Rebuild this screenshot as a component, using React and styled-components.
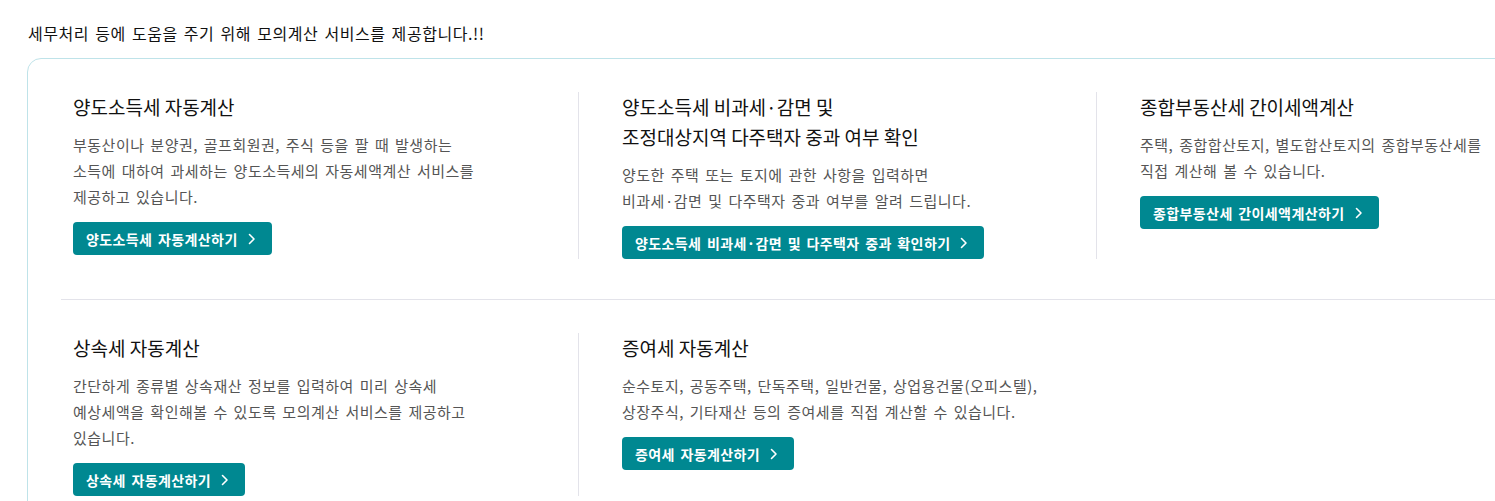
import React from 'react';
import styled, { createGlobalStyle } from 'styled-components';

const GlobalStyle = createGlobalStyle`
  html, body {
    margin: 0;
    padding: 0;
    background: #ffffff;
    overflow: hidden;
  }
  body {
    font-family: "Noto Sans CJK KR", "Noto Sans", sans-serif;
  }
`;

const rows = [
  [
    {
      title: ['양도소득세 자동계산'],
      desc: [
        '부동산이나 분양권, 골프회원권, 주식 등을 팔 때 발생하는',
        '소득에 대하여 과세하는 양도소득세의 자동세액계산 서비스를',
        '제공하고 있습니다.',
      ],
      button: '양도소득세 자동계산하기',
    },
    {
      title: ['양도소득세 비과세·감면 및', '조정대상지역 다주택자 중과 여부 확인'],
      desc: [
        '양도한 주택 또는 토지에 관한 사항을 입력하면',
        '비과세·감면 및 다주택자 중과 여부를 알려 드립니다.',
      ],
      button: '양도소득세 비과세·감면 및 다주택자 중과 확인하기',
    },
    {
      title: ['종합부동산세 간이세액계산'],
      desc: [
        '주택, 종합합산토지, 별도합산토지의 종합부동산세를',
        '직접 계산해 볼 수 있습니다.',
      ],
      button: '종합부동산세 간이세액계산하기',
    },
  ],
  [
    {
      title: ['상속세 자동계산'],
      desc: [
        '간단하게 종류별 상속재산 정보를 입력하여 미리 상속세',
        '예상세액을 확인해볼 수 있도록 모의계산 서비스를 제공하고',
        '있습니다.',
      ],
      button: '상속세 자동계산하기',
    },
    {
      title: ['증여세 자동계산'],
      desc: [
        '순수토지, 공동주택, 단독주택, 일반건물, 상업용건물(오피스텔),',
        '상장주식, 기타재산 등의 증여세를 직접 계산할 수 있습니다.',
      ],
      button: '증여세 자동계산하기',
    },
  ],
];

const Chevron = () => (
  <svg width="8" height="12" viewBox="0 0 8 12" fill="none">
    <path d="M1.5 1.5 L6 6 L1.5 10.5" stroke="#ffffff" strokeWidth="1.6" strokeLinecap="round" strokeLinejoin="round" />
  </svg>
);

const Lines = ({ lines }) =>
  lines.map((line, i) => (
    <React.Fragment key={i}>
      {i > 0 && <br />}
      {line}
    </React.Fragment>
  ));

const App = () => (
  <Page>
    <GlobalStyle />
    <Intro>세무처리 등에 도움을 주기 위해 모의계산 서비스를 제공합니다.!!</Intro>
    <Card>
      {rows.map((row, r) => (
        <Row key={r} last={r === rows.length - 1}>
          {row.map((item, c) => (
            <Column key={c} first={c === 0}>
              <Title>
                <Lines lines={item.title} />
              </Title>
              <Desc>
                <Lines lines={item.desc} />
              </Desc>
              <ActionButton type="button">
                {item.button}
                <Chevron />
              </ActionButton>
            </Column>
          ))}
        </Row>
      ))}
    </Card>
  </Page>
);

const Page = styled.div`
  padding: 21px 0 0 27px;
  width: 1700px;
`;

const Intro = styled.p`
  margin: 0 0 13px 1px;
  font-size: 16px;
  line-height: 24px;
  color: #111111;
  letter-spacing: 0.55px;
  word-spacing: 2px;
`;

const Card = styled.div`
  width: 1640px;
  border: 1px solid #bfe3e9;
  border-radius: 14px;
  padding: 0 0 0 33px;
`;

const Row = styled.div`
  display: grid;
  grid-template-columns: 517px 518px 518px;
  padding: 33px 0 40px;
  border-bottom: ${props => (props.last ? 'none' : '1px solid #e3e3ea')};
`;

const Column = styled.div`
  display: flex;
  flex-direction: column;
  align-items: flex-start;
  padding-left: ${props => (props.first ? '12px' : '43px')};
  border-left: ${props => (props.first ? 'none' : '1px solid #e3e3ea')};
`;

const Title = styled.h3`
  margin: 0 0 10px;
  font-size: 19px;
  font-weight: 400;
  line-height: 30px;
  color: #111111;
  white-space: nowrap;
`;

const Desc = styled.p`
  margin: 0 0 12px;
  font-size: 15px;
  line-height: 26px;
  color: #555555;
  letter-spacing: 0.5px;
  word-spacing: 2px;
  white-space: nowrap;
`;

const ActionButton = styled.button`
  display: inline-flex;
  align-items: center;
  gap: 10px;
  height: 33px;
  padding: 0 16px 0 13px;
  border: none;
  border-radius: 4px;
  background: #008891;
  color: #ffffff;
  font-family: inherit;
  font-size: 14px;
  font-weight: 700;
  letter-spacing: 0.4px;
  word-spacing: 2px;
  cursor: pointer;
`;

export default App;
